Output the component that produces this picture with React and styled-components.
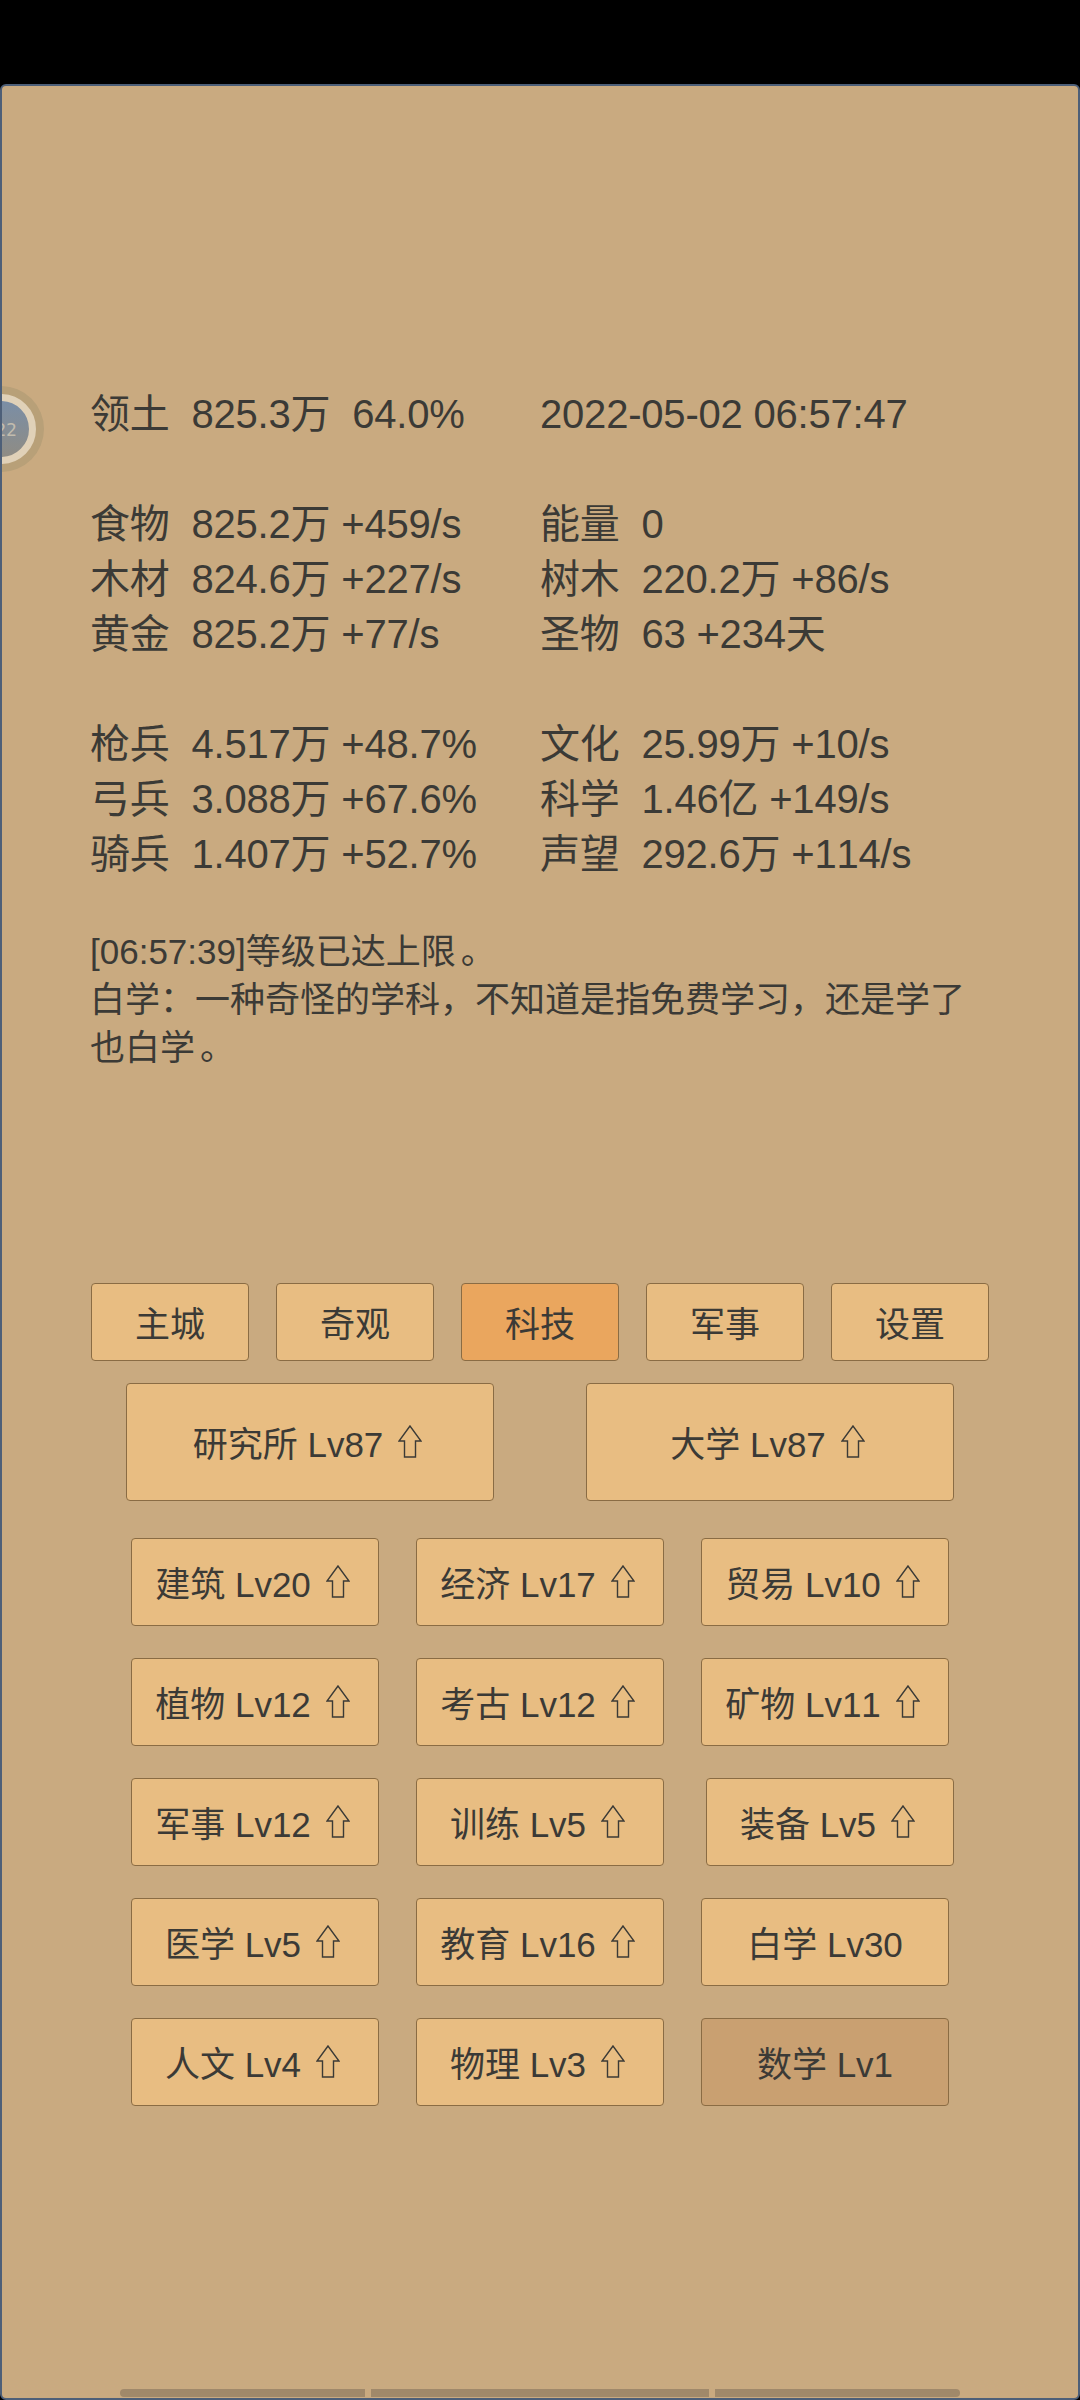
import styled, { createGlobalStyle } from "styled-components";

const GlobalStyle = createGlobalStyle`
	html, body {
		margin: 0;
		padding: 0;
		background-color: #000;
	}
	* {
		box-sizing: border-box;
	}
`;

const Panel = styled.div`
	position: relative;
	margin-top: 84px;
	height: 2316px;
	display: flex;
	flex-direction: column;
	background-color: #c9aa80;
	border: 2px solid #4d5f78;
	border-radius: 6px;
	padding: 301px 0 0 88px;
	color: #3b3a36;
	font-family: "Liberation Sans", "Noto Sans CJK SC", sans-serif;
	font-kerning: none;
	overflow: hidden;
`;

const Orb = styled.div`
	position: absolute;
	left: -44px;
	top: 300px;
	width: 86px;
	height: 86px;
	border-radius: 50%;
	background-color: #b8a078;
	display: flex;
	align-items: center;
	justify-content: center;
`;

const OrbInner = styled.div`
	width: 70px;
	height: 70px;
	border-radius: 50%;
	background: linear-gradient(#7a8ea6, #8f8c84);
	border: 7px solid #e0d1b8;
	color: #c2bcae;
	font-size: 18px;
	font-family: "DejaVu Sans Mono", monospace;
	display: flex;
	align-items: center;
	justify-content: center;
	padding-left: 10px;
`;

const Stats = styled.div`
	display: grid;
	grid-template-columns: 450px 1fr;
	font-size: 40px;
	line-height: 55px;
	letter-spacing: -0.2px;
	white-space: pre;
`;

const Gap = styled.div`
	grid-column: 1 / 3;
	height: 55px;
`;

const Log = styled.div`
	margin-top: 46px;
	width: 905px;
	font-size: 35px;
	line-height: 48px;
`;

const Stop = styled.span`
	margin-left: 5px;
`;

const NavRow = styled.div`
	margin-top: 211px;
	display: flex;
	gap: 27px;
	margin-left: 1px;
`;

const Btn = styled.div`
	display: flex;
	align-items: center;
	justify-content: center;
	white-space: pre;
	font-size: 35px;
	padding-bottom: 2px;
	border: 1px solid #8a6c44;
	border-radius: 4px;
	background-color: ${(p) => (p.$active ? "#eaa65e" : p.$maxed ? "#c9a071" : "#e8bd82")};
`;

const NavBtn = styled(Btn)`
	width: 158px;
	height: 78px;
`;

const BigRow = styled.div`
	margin-top: 22px;
	margin-left: 36px;
	display: flex;
	gap: 92px;
`;

const BigBtn = styled(Btn)`
	width: 368px;
	height: 118px;
`;

const TechGrid = styled.div`
	margin-top: 37px;
	margin-left: 41px;
	display: flex;
	flex-direction: column;
	gap: 32px;
`;

const TechRow = styled.div`
	display: flex;
	gap: 37px;
`;

const TechBtn = styled(Btn)`
	width: 248px;
	height: 88px;
	margin-left: ${(p) => (p.$nudge ? "5px" : "0")};
`;

const ArrowIcon = styled.svg`
	width: 24px;
	height: 33px;
	margin-left: 15px;
	margin-right: 5px;
	flex: none;
`;

const Pager = styled.div`
	position: absolute;
	left: 118px;
	bottom: 1px;
	display: flex;
	gap: 6px;
`;

const PagerBar = styled.div`
	width: ${(p) => p.$w}px;
	height: 8px;
	background-color: #a0896a;
	border-radius: ${(p) => p.$radius};
`;

const statRows = [
	["领土  825.3万  64.0%", "2022-05-02 06:57:47"],
	null,
	["食物  825.2万 +459/s", "能量  0"],
	["木材  824.6万 +227/s", "树木  220.2万 +86/s"],
	["黄金  825.2万 +77/s", "圣物  63 +234天"],
	null,
	["枪兵  4.517万 +48.7%", "文化  25.99万 +10/s"],
	["弓兵  3.088万 +67.6%", "科学  1.46亿 +149/s"],
	["骑兵  1.407万 +52.7%", "声望  292.6万 +114/s"],
];

const navItems = ["主城", "奇观", "科技", "军事", "设置"];

const techRows = [
	[{ name: "建筑 Lv20", up: true }, { name: "经济 Lv17", up: true }, { name: "贸易 Lv10", up: true }],
	[{ name: "植物 Lv12", up: true }, { name: "考古 Lv12", up: true }, { name: "矿物 Lv11", up: true }],
	[{ name: "军事 Lv12", up: true }, { name: "训练 Lv5", up: true }, { name: "装备 Lv5", up: true, nudge: true }],
	[{ name: "医学 Lv5", up: true }, { name: "教育 Lv16", up: true }, { name: "白学 Lv30" }],
	[{ name: "人文 Lv4", up: true }, { name: "物理 Lv3", up: true }, { name: "数学 Lv1", maxed: true }],
];

function Up() {
	return (
		<ArrowIcon viewBox="0 0 24 33">
			<path d="M12 1 L1 16 H6.5 V32 H17.5 V16 H23 Z" fill="none" stroke="#3b3a36" strokeWidth="1.4" />
		</ArrowIcon>
	);
}

export default function App() {
	return (
		<>
			<GlobalStyle />
			<Panel>
				<Orb>
					<OrbInner>22</OrbInner>
				</Orb>
				<Stats>
					{statRows.map((row, i) =>
						row ? (
							<div key={i} style={{ display: "contents" }}>
								<div>{row[0]}</div>
								<div>{row[1]}</div>
							</div>
						) : (
							<Gap key={i} />
						)
					)}
				</Stats>
				<Log>
					[06:57:39]等级已达上限<Stop>。</Stop>
					<br />
					白学：一种奇怪的学科，不知道是指免费学习，还是学了也白学<Stop>。</Stop>
				</Log>
				<NavRow>
					{navItems.map((item) => (
						<NavBtn key={item} $active={item === "科技"}>
							{item}
						</NavBtn>
					))}
				</NavRow>
				<BigRow>
					<BigBtn>
						研究所 Lv87
						<Up />
					</BigBtn>
					<BigBtn>
						大学 Lv87
						<Up />
					</BigBtn>
				</BigRow>
				<TechGrid>
					{techRows.map((row, i) => (
						<TechRow key={i}>
							{row.map((t) => (
								<TechBtn key={t.name} $nudge={t.nudge} $maxed={t.maxed}>
									{t.name}
									{t.up && <Up />}
								</TechBtn>
							))}
						</TechRow>
					))}
				</TechGrid>
				<Pager>
					<PagerBar $w={245} $radius="5px 0 0 5px" />
					<PagerBar $w={338} $radius="0" />
					<PagerBar $w={245} $radius="0 5px 5px 0" />
				</Pager>
			</Panel>
		</>
	);
}
